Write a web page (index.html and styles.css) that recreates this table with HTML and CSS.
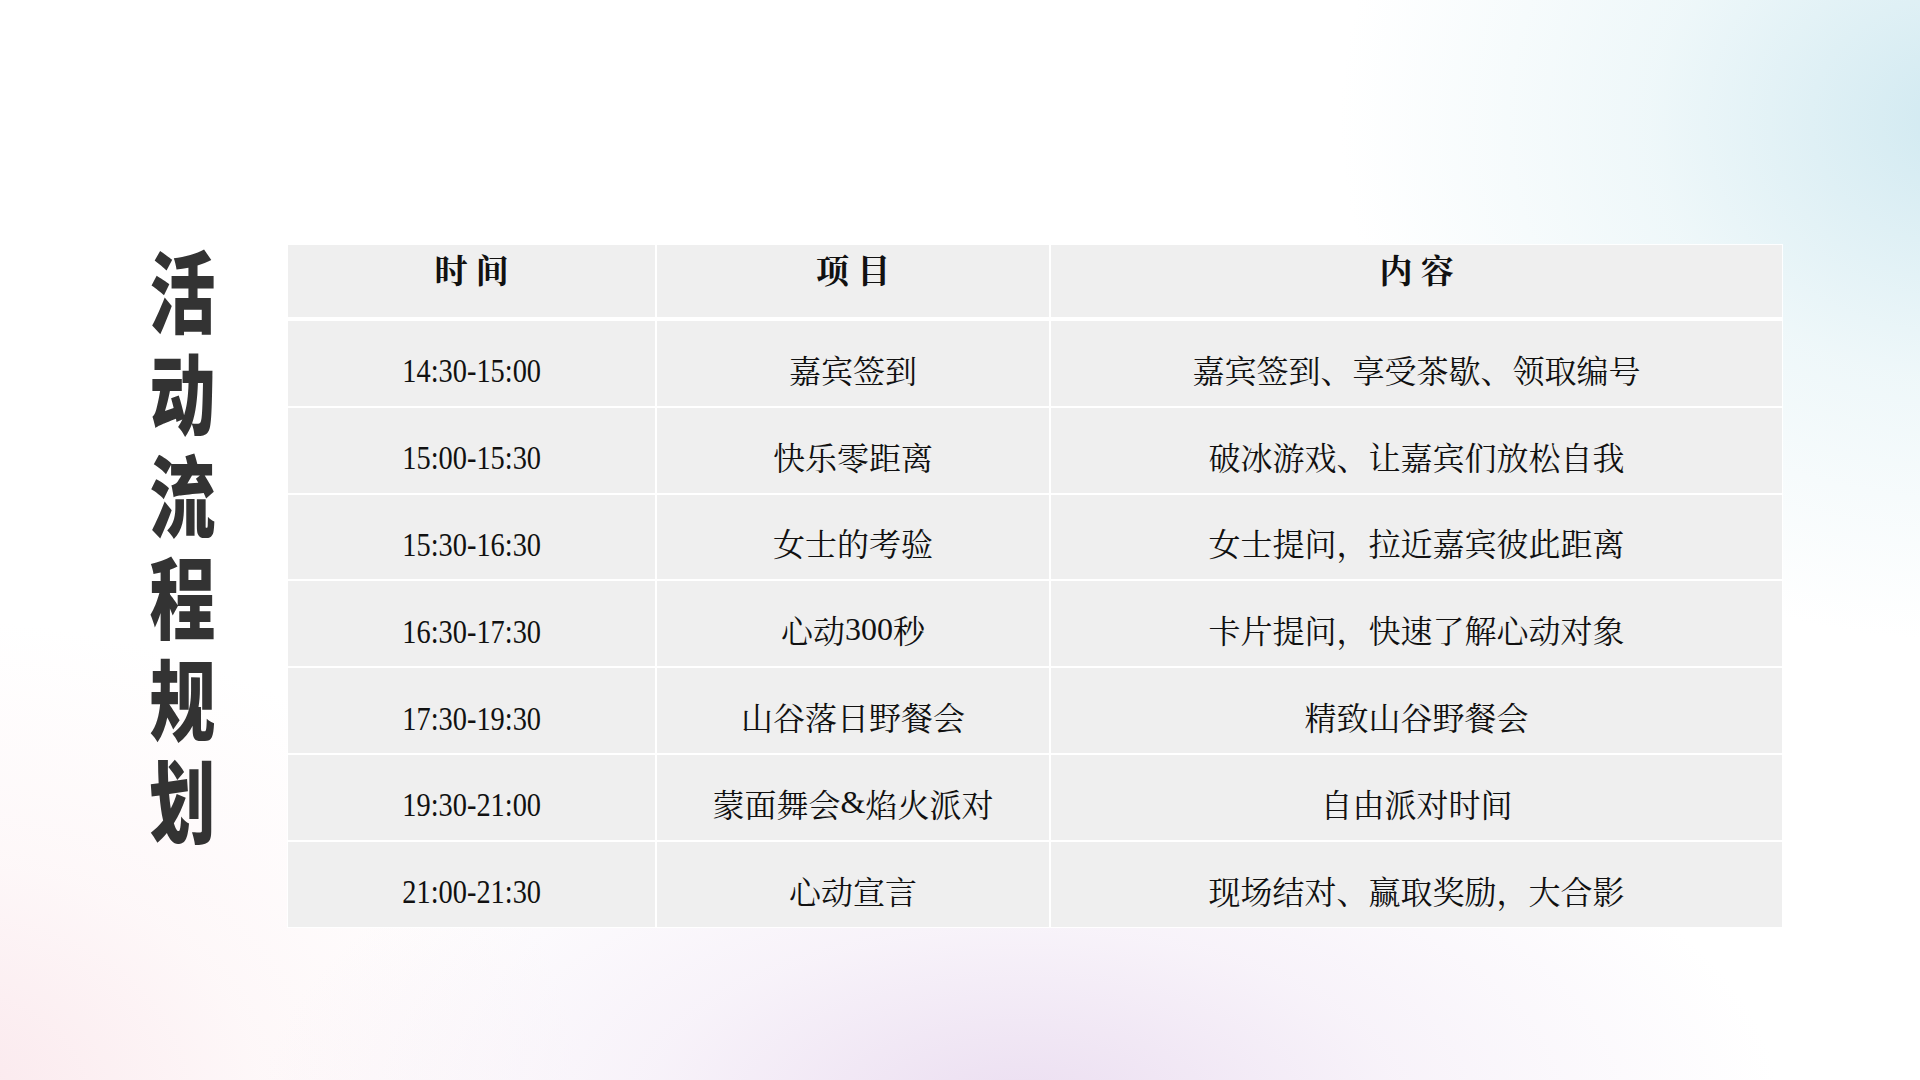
FILE: index.html
```html
<!DOCTYPE html>
<html lang="zh-CN">
<head>
<meta charset="utf-8">
<title>活动流程规划</title>
<link rel="stylesheet" href="styles.css">
</head>
<body>
<div class="slide">
  <div class="title-wrap">
    <h1 class="title">活动流程规划</h1>
  </div>
  <div class="schedule">
    <div class="cell head">时 间</div>
    <div class="cell head">项 目</div>
    <div class="cell head">内 容</div>

    <div class="cell"><span class="num">14:30-15:00</span></div>
    <div class="cell">嘉宾签到</div>
    <div class="cell">嘉宾签到、享受茶歇、领取编号</div>

    <div class="cell"><span class="num">15:00-15:30</span></div>
    <div class="cell">快乐零距离</div>
    <div class="cell">破冰游戏、让嘉宾们放松自我</div>

    <div class="cell"><span class="num">15:30-16:30</span></div>
    <div class="cell">女士的考验</div>
    <div class="cell">女士提问，拉近嘉宾彼此距离</div>

    <div class="cell"><span class="num">16:30-17:30</span></div>
    <div class="cell">心动<span class="digits">300</span>秒</div>
    <div class="cell">卡片提问，快速了解心动对象</div>

    <div class="cell"><span class="num">17:30-19:30</span></div>
    <div class="cell">山谷落日野餐会</div>
    <div class="cell">精致山谷野餐会</div>

    <div class="cell"><span class="num">19:30-21:00</span></div>
    <div class="cell">蒙面舞会<span class="digits">&amp;</span>焰火派对</div>
    <div class="cell">自由派对时间</div>

    <div class="cell"><span class="num">21:00-21:30</span></div>
    <div class="cell">心动宣言</div>
    <div class="cell">现场结对、赢取奖励，大合影</div>
  </div>
</div>
</body>
</html>
```

FILE: styles.css
```css
html, body {
  margin: 0;
  padding: 0;
}

body {
  width: 1920px;
  height: 1080px;
  overflow: hidden;
  background-color: #ffffff;
  background-image:
    radial-gradient(ellipse 620px 520px at 1960px 120px, rgba(206, 232, 240, 0.95), rgba(222, 240, 244, 0.5) 50%, rgba(255, 255, 255, 0) 100%),
    radial-gradient(ellipse 760px 360px at 1020px 1110px, rgba(234, 220, 240, 0.95), rgba(240, 230, 244, 0.5) 50%, rgba(255, 255, 255, 0) 100%),
    radial-gradient(ellipse 640px 480px at -60px 1100px, rgba(250, 230, 235, 0.95), rgba(252, 240, 242, 0.5) 50%, rgba(255, 255, 255, 0) 100%);
  font-family: "Liberation Serif", "Noto Serif CJK SC", "Noto Sans CJK SC", serif;
  color: #111111;
}

.slide {
  display: flex;
  align-items: flex-start;
  padding: 245px 0 0 135px;
}

.title-wrap {
  width: 94px;
  margin-top: 3px;
  margin-right: 59px;
  display: flex;
  justify-content: center;
}

.title {
  margin: 0;
  writing-mode: vertical-rl;
  text-orientation: upright;
  font-family: "Noto Sans CJK SC", sans-serif;
  font-weight: 900;
  font-size: 89px;
  line-height: 94px;
  letter-spacing: 13px;
  color: #333333;
  transform: scaleX(0.74);
}

.schedule {
  display: grid;
  grid-template-columns: 367px 392px 731px;
  grid-template-rows: 74px repeat(7, 84.8px);
  gap: 2px;
  background: #ffffff;
  box-shadow: 0 0 0 1px rgba(255, 255, 255, 0.9);
}

.cell {
  background: #efefef;
  display: flex;
  align-items: center;
  justify-content: center;
  padding-top: 11px;
  box-sizing: border-box;
  font-size: 32px;
  white-space: nowrap;
}

.cell.head {
  align-items: flex-start;
  padding-top: 0;
  font-size: 33px;
  font-weight: bold;
  border-bottom: 2px solid #ffffff;
}

.num {
  display: inline-block;
  margin-top: 6px;
  font-family: "Liberation Serif", serif;
  font-size: 33px;
  transform: scaleX(0.86);
}

.digits {
  font-family: "Liberation Serif", serif;
}
```
